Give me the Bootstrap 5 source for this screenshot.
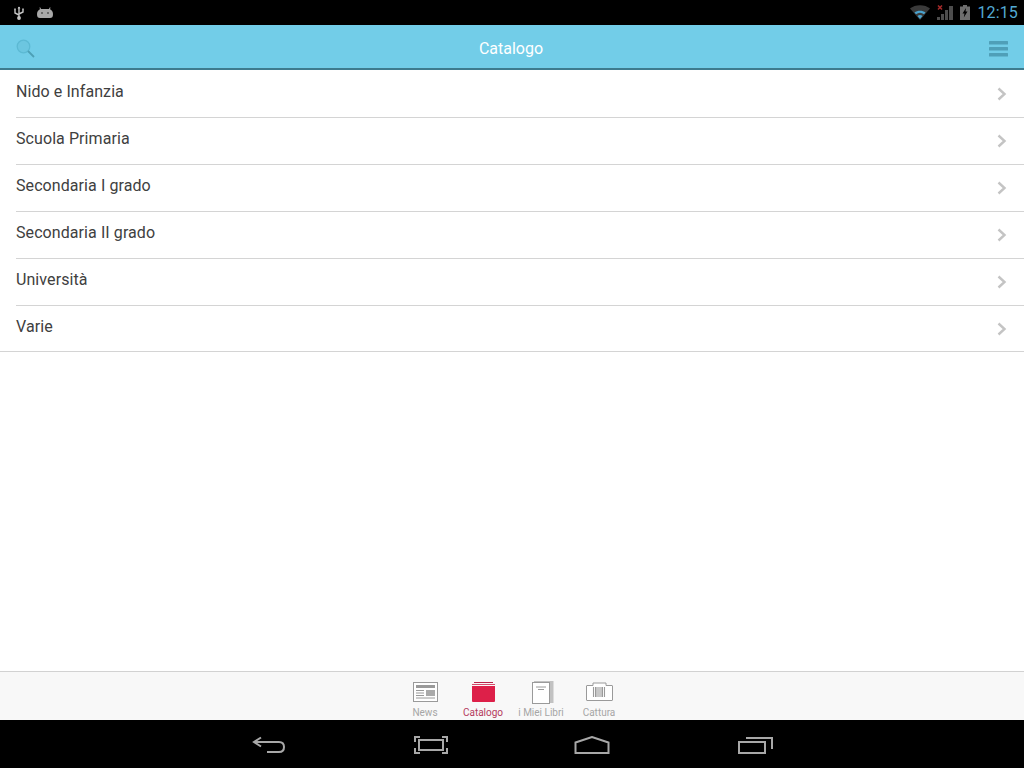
<!DOCTYPE html>
<html lang="it">
<head>
    <meta charset="UTF-8">
    <meta name="viewport" content="width=device-width, initial-scale=1.0">
    <title>Catalogo</title>
    <link rel="stylesheet" href="https://cdn.jsdelivr.net/npm/bootstrap@5.3.3/dist/css/bootstrap.min.css">
    <style>
        html, body { height: 100%; }
        body { font-family: Roboto, "Liberation Sans", sans-serif; background: #fff; overflow: hidden; }
        .screen { height: 768px; }

        .status-bar { height: 25px; background: #000; padding: 0 6px 0 12px; }
        .status-left { gap: 11px; }
        .status-right { gap: 7px; }
        .status-clock { font-size: 16px; line-height: 25px; color: #52a9d3; letter-spacing: .15px; }

        .top-bar { height: 45px; background: #72cde8; border-bottom: 2px solid #3d7b8e; padding: 4px 16px 0; }
        .top-title { font-size: 16px; color: #fff; line-height: 1; margin-right: 2px; }

        .menu-list { border-radius: 0; padding-top: 1px; }
        .menu-row { height: 47px; padding: 0 17px 0 16px; border: 0; font-size: 16px; letter-spacing: .08px; color: #404040; }
        .menu-row span { padding-bottom: 6px; }
        .menu-row svg { margin-top: -1px; }
        .menu-row::after { content: ""; position: absolute; left: 16px; right: 0; bottom: 0; height: 1px; background: #d4d4d4; }
        .menu-row:last-child { height: 46px; }
        .menu-row:last-child span { padding-bottom: 4px; }
        .menu-row:last-child::after { left: 0; }

        .tab-bar { height: 49px; background: #f8f8f8; border-top: 1px solid #d2d2d2; }
        .tab-item { width: 58px; font-size: 10px; line-height: 12px; color: #a6a6a6; }
        .tab-item svg { display: block; margin: 10px auto 5px; }
        .tab-item svg.book-icon { margin: 9px auto 3px; }
        .tab-active { color: #b53a5d; }

        .nav-bar { height: 48px; background: #000; padding-top: 2px; }
        .nav-gap { margin-left: 128px; }
        .nav-gap-home { margin-left: 126px; }
    </style>
</head>
<body>
<div class="screen d-flex flex-column">

    <div class="status-bar d-flex align-items-center justify-content-between">
        <div class="d-flex align-items-center status-left">
            <svg width="14" height="14" viewBox="0 0 14 14" fill="none" stroke="#c4c4c4" stroke-width="1.4">
                <path d="M7 1v12M3 4v3l4 2M11 4v2l-4 2"/><circle cx="7" cy="12" r="1.2" fill="#c4c4c4"/>
                <rect x="2.200" y="2.500" width="1.600" height="1.600" fill="#c4c4c4" stroke="none"/><rect x="10.200" y="2.500" width="1.600" height="1.600" fill="#c4c4c4" stroke="none"/>
                <path d="M5.600 2.400 7 .6l1.400 1.800z" fill="#c4c4c4" stroke="none"/>
            </svg>
            <svg width="16" height="12" viewBox="0 0 16 12">
                <path d="M0 7c0-3 2-4.500 3-4.800L2.500.5l.6-.3 1 1.700h7.800l1-1.700.6.3-.5 1.700c1 .3 3 1.800 3 4.800 0 3-1 4-3 4H3c-2 0-3-1-3-4z" fill="#a8a8a8"/>
                <circle cx="5" cy="6" r="1" fill="#555"/><circle cx="11" cy="6" r="1" fill="#555"/>
            </svg>
        </div>
        <div class="d-flex align-items-center status-right">
            <svg width="20" height="15" viewBox="0 0 20 15">
                <path d="M0 3.500C5-1 15-1 20 3.500L10 15z" fill="#3a3a3a"/>
                <path d="M4.500 7.500c3-2.500 8-2.500 11 0L14 9.300c-2.500-2-5.500-2-8 0z" fill="#4aa3cf"/>
                <path d="M7.500 11c1.500-1.200 3.500-1.200 5 0L10 14z" fill="#4aa3cf"/>
            </svg>
            <svg width="16" height="16" viewBox="0 0 16 16">
                <path d="M0 15h3v-3H0zM4 15h3V9H4zM8 15h3V5H8zM12 15h4V1h-4z" fill="#4d4d4d"/>
                <path d="M1 .5l4 4M5 .5l-4 4" stroke="#a52a2a" stroke-width="1.500"/>
            </svg>
            <svg width="10" height="15" viewBox="0 0 10 15">
                <path d="M3 0h4v1.500h3V15H0V1.500h3z" fill="#6e6e6e"/>
                <path d="M6 3 2.500 8.500h2L3.800 12.500 7.500 6.500h-2z" fill="#000"/>
            </svg>
            <span class="status-clock">12:15</span>
        </div>
    </div>

    <div class="top-bar d-flex align-items-center justify-content-between">
        <svg width="19" height="19" viewBox="0 0 19 19" fill="none" stroke="#5cb9d3" stroke-width="1.300">
            <circle cx="7.500" cy="7.500" r="6.300" fill="#6cc6e0"/>
            <path d="M12 12l6 6" stroke="#4d9fb6" stroke-width="1.800"/>
        </svg>
        <div class="top-title">Catalogo</div>
        <svg width="19" height="16" viewBox="0 0 19 16" fill="#4f9fb8">
            <rect width="19" height="3.500" rx=".5"/><rect y="6" width="19" height="3.500" rx=".5"/><rect y="12" width="19" height="3.500" rx=".5"/>
        </svg>
    </div>

    <div class="list-group menu-list">
        <div class="list-group-item menu-row d-flex align-items-center justify-content-between">
            <span>Nido e Infanzia</span>
            <svg width="10" height="14" viewBox="0 0 10 14" fill="none" stroke="#c4c4c4" stroke-width="2.400"><path d="M1.500 1.500 7.500 7l-6 5.500"/></svg>
        </div>
        <div class="list-group-item menu-row d-flex align-items-center justify-content-between">
            <span>Scuola Primaria</span>
            <svg width="10" height="14" viewBox="0 0 10 14" fill="none" stroke="#c4c4c4" stroke-width="2.400"><path d="M1.500 1.500 7.500 7l-6 5.500"/></svg>
        </div>
        <div class="list-group-item menu-row d-flex align-items-center justify-content-between">
            <span>Secondaria I grado</span>
            <svg width="10" height="14" viewBox="0 0 10 14" fill="none" stroke="#c4c4c4" stroke-width="2.400"><path d="M1.500 1.500 7.500 7l-6 5.500"/></svg>
        </div>
        <div class="list-group-item menu-row d-flex align-items-center justify-content-between">
            <span>Secondaria II grado</span>
            <svg width="10" height="14" viewBox="0 0 10 14" fill="none" stroke="#c4c4c4" stroke-width="2.400"><path d="M1.500 1.500 7.500 7l-6 5.500"/></svg>
        </div>
        <div class="list-group-item menu-row d-flex align-items-center justify-content-between">
            <span>Università</span>
            <svg width="10" height="14" viewBox="0 0 10 14" fill="none" stroke="#c4c4c4" stroke-width="2.400"><path d="M1.500 1.500 7.500 7l-6 5.500"/></svg>
        </div>
        <div class="list-group-item menu-row d-flex align-items-center justify-content-between">
            <span>Varie</span>
            <svg width="10" height="14" viewBox="0 0 10 14" fill="none" stroke="#c4c4c4" stroke-width="2.400"><path d="M1.500 1.500 7.500 7l-6 5.500"/></svg>
        </div>
    </div>

    <div class="flex-grow-1"></div>

    <div class="tab-bar d-flex justify-content-center">
        <div class="tab-item text-center">
            <svg width="25" height="20" viewBox="0 0 25 20" fill="none">
                <rect x=".5" y=".5" width="24" height="19" fill="#fff" stroke="#9a9a9a"/>
                <rect x="3" y="3" width="19" height="3" fill="#9a9a9a"/>
                <rect x="13" y="8" width="9" height="6" fill="#aaa"/>
                <path d="M3 8.500h8M3 11h8M3 13.500h8M3 16h19" stroke="#9a9a9a"/>
            </svg>
            News
        </div>
        <div class="tab-item tab-active text-center">
            <svg width="25" height="20" viewBox="0 0 25 20">
                <rect x="3" y="0" width="19" height="1" fill="#b8234a"/>
                <rect x="1" y="2" width="23" height="1" fill="#d8486a"/>
                <path d="M1 4h23v15a1 1 0 0 1-1 1H2a1 1 0 0 1-1-1z" fill="#dd2049"/>
            </svg>
            Catalogo
        </div>
        <div class="tab-item text-center">
            <svg class="book-icon" width="25" height="23" viewBox="0 0 25 23" fill="none">
                <rect x="5" y="0" width="19.500" height="22" fill="#c2c2c2"/>
                <rect x="3.500" y="1.500" width="17" height="21" fill="#fff" stroke="#9a9a9a"/>
                <path d="M7 6h10M9 8.500h6" stroke="#9a9a9a"/>
            </svg>
            i Miei Libri
        </div>
        <div class="tab-item text-center">
            <svg width="27" height="20" viewBox="0 0 27 20" fill="none">
                <path d="M1 3.500h6V1h13v2.500h6a.5.5 0 0 1 .5.5v14a.5.5 0 0 1-.5.5H1a.5.5 0 0 1-.5-.5V4a.5.5 0 0 1 .5-.5z" fill="#fff" stroke="#9a9a9a"/>
                <path d="M7.500 5v10M9.500 5v10M11 5v10M13 5v10M15 5v10M16.500 5v10M18.500 5v10" stroke="#9a9a9a" stroke-width="1.100"/>
            </svg>
            Cattura
        </div>
    </div>

    <div class="nav-bar d-flex align-items-center justify-content-center">
        <svg width="34" height="18" viewBox="0 0 34 18" fill="none" stroke="#a8a8a8" stroke-width="2">
            <path d="M9 1.500 2 6l7 4.500M2 6h25c3 0 5 2 5 5s-2 5-5 5H15"/>
        </svg>
        <svg class="nav-gap" width="34" height="18" viewBox="0 0 34 18" fill="none" stroke="#a8a8a8" stroke-width="2">
            <rect x="5" y="4" width="24" height="10"/>
            <path d="M6 1H1v5M28 1h5v5M6 17H1v-5M28 17h5v-5"/>
        </svg>
        <svg class="nav-gap-home" width="36" height="18" viewBox="0 0 36 18" fill="none" stroke="#a8a8a8" stroke-width="2">
            <path d="M1.500 6.500 18 1l16.500 5.500V17H1.500z"/>
        </svg>
        <svg class="nav-gap" width="35" height="18" viewBox="0 0 35 18" fill="none" stroke="#a8a8a8" stroke-width="2">
            <rect x="1" y="6" width="26" height="11"/>
            <path d="M8 2h26v11"/>
        </svg>
    </div>
</div>
<script src="https://cdn.jsdelivr.net/npm/bootstrap@5.3.3/dist/js/bootstrap.bundle.min.js"></script>
</body>
</html>
